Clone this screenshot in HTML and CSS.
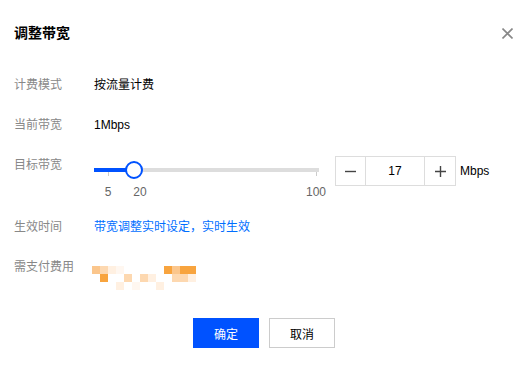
FILE: index.html
```html
<!DOCTYPE html>
<html lang="zh-CN">
<head>
  <meta charset="UTF-8" />
  <meta name="viewport" content="width=device-width, initial-scale=1.0"/>
  <title>调整带宽</title>
  <link rel="stylesheet" href="styles.css">
</head>
<body>

  <div class="dialog">
    <div class="dialog-head">
      <h3 class="dialog-title">调整带宽</h3>
      <button class="close-btn">
        <svg width="11" height="11" viewBox="0 0 11 11">
          <path d="M0.5 0.5L10.5 10.5M10.5 0.5L0.5 10.5" stroke="#888" stroke-width="1.6" fill="none"/>
        </svg>
      </button>
    </div>

    <div class="form">
      <div class="form-item">
        <div class="form-label">计费模式</div>
        <div class="form-value">按流量计费</div>
      </div>

      <div class="form-item">
        <div class="form-label">当前带宽</div>
        <div class="form-value">1Mbps</div>
      </div>

      <div class="form-item">
        <div class="form-label">目标带宽</div>
        <div class="form-value bw-control">
          <div class="slider">
            <div class="slider-track"></div>
            <div class="slider-mark" style="left: 14px;"></div>
            <div class="slider-mark" style="left: 222px;"></div>
            <div class="slider-fill" style="width: 41px;"></div>
            <div class="slider-thumb" style="left: 31px;"></div>
            <span class="slider-label" style="left: 14px;">5</span>
            <span class="slider-label" style="left: 46px;">20</span>
            <span class="slider-label" style="left: 222px;">100</span>
          </div>
          <div class="stepper">
            <button class="step-btn step-minus">
              <svg width="11" height="11" viewBox="0 0 11 11"><path d="M0 5.5H11" stroke="#444" stroke-width="1.4"/></svg>
            </button>
            <input class="step-input" type="text" value="17">
            <button class="step-btn step-plus">
              <svg width="11" height="11" viewBox="0 0 11 11"><path d="M0 5.5H11M5.5 0V11" stroke="#444" stroke-width="1.4"/></svg>
            </button>
          </div>
          <span class="unit">Mbps</span>
        </div>
      </div>

      <div class="form-item">
        <div class="form-label">生效时间</div>
        <div class="form-value link-text">带宽调整实时设定，实时生效</div>
      </div>

      <div class="form-item last">
        <div class="form-label">需支付费用</div>
        <div class="form-value">
          <!-- valor borrado (mosaico) -->
          <div class="mosaic">
            <i class="m2"></i><i class="m3"></i><i class="m4"></i><i class="m5"></i><i></i><i></i><i></i><i></i><i></i><i class="m1"></i><i class="m2"></i><i class="m1"></i><i class="m1"></i>
            <i></i><i class="m1"></i><i></i><i></i><i class="m3"></i><i></i><i class="m3"></i><i class="m4"></i><i></i><i></i><i class="m3"></i><i class="m3"></i><i class="m4"></i>
            <i></i><i></i><i></i><i class="m4"></i><i></i><i class="m5"></i><i></i><i></i><i class="m4"></i><i></i><i></i><i></i><i></i>
          </div>
        </div>
      </div>
    </div>

    <div class="dialog-foot">
      <button class="btn btn-primary">确定</button>
      <button class="btn btn-default">取消</button>
    </div>
  </div>

</body>
</html>
```

FILE: styles.css
```css
body {
  margin: 0;
  font-family: "Liberation Sans", "Noto Sans CJK SC", sans-serif;
  font-size: 12px;
  color: #000;
  background: #fff;
}

.dialog-head {
  display: flex;
  justify-content: space-between;
  align-items: center;
  padding: 24px 19px 0 14px;
}

.dialog-title {
  margin: 0;
  font-size: 14px;
  font-weight: bold;
  line-height: 18px;
  color: #000;
}

.close-btn {
  display: block;
  width: 11px;
  height: 11px;
  padding: 0;
  border: none;
  background: none;
  cursor: pointer;
}

.close-btn svg {
  display: block;
}

.form {
  padding: 34px 14px 0;
}

.form-item {
  display: flex;
  line-height: 18px;
  margin-bottom: 22px;
}

.form-item.last {
  margin-bottom: 0;
}

.form-label {
  width: 80px;
  flex-shrink: 0;
  color: #888;
}

.form-value {
  color: #000;
}

.link-text {
  color: #006eff;
}

.bw-control {
  display: flex;
  align-items: flex-start;
  height: 40px;
}

.slider {
  position: relative;
  width: 225px;
  height: 40px;
}

.slider-track {
  margin-top: 12px;
  height: 4px;
  background: #ddd;
}

.slider-fill {
  position: absolute;
  left: 0;
  top: 12px;
  height: 4px;
  background: #0052ff;
}

.slider-mark {
  position: absolute;
  top: 16px;
  width: 1px;
  height: 4px;
  background: #ccc;
}

.slider-thumb {
  position: absolute;
  top: 5px;
  width: 14px;
  height: 14px;
  border: 2px solid #0052ff;
  border-radius: 50%;
  background: #fff;
}

.slider-label {
  position: absolute;
  top: 27px;
  transform: translateX(-50%);
  color: #666;
}

.stepper {
  display: flex;
  margin-left: 16px;
  height: 30px;
  border: 1px solid #ddd;
  box-sizing: border-box;
}

.step-btn {
  display: flex;
  align-items: center;
  justify-content: center;
  width: 30px;
  padding: 0;
  border: none;
  background: #fff;
  box-sizing: border-box;
  cursor: pointer;
}

.step-minus {
  border-right: 1px solid #ddd;
}

.step-plus {
  width: 31px;
  border-left: 1px solid #ddd;
}

.step-input {
  width: 58px;
  padding: 0;
  border: none;
  outline: none;
  text-align: center;
  font-family: inherit;
  font-size: 12px;
  color: #000;
}

.unit {
  margin-left: 4px;
  line-height: 30px;
}

.mosaic {
  display: grid;
  grid-template-columns: repeat(13, 8px);
  grid-auto-rows: 8px;
  margin-top: 8px;
  margin-left: -2px;
}

.mosaic i {
  display: block;
}

.mosaic .m1 { background: #f8a43e; }
.mosaic .m2 { background: #fbc68c; }
.mosaic .m3 { background: #fdd8b0; }
.mosaic .m4 { background: #fff0e1; }
.mosaic .m5 { background: #fff7f0; }

.dialog-foot {
  display: flex;
  justify-content: center;
  gap: 10px;
  margin-top: 28px;
  padding-right: 4px;
}

.btn {
  width: 66px;
  height: 30px;
  padding: 0;
  font-family: inherit;
  font-size: 12px;
  cursor: pointer;
  box-sizing: border-box;
}

.btn-primary {
  border: none;
  background: #0052ff;
  color: #fff;
}

.btn-default {
  border: 1px solid #ccc;
  background: #fff;
  color: #000;
}
```
